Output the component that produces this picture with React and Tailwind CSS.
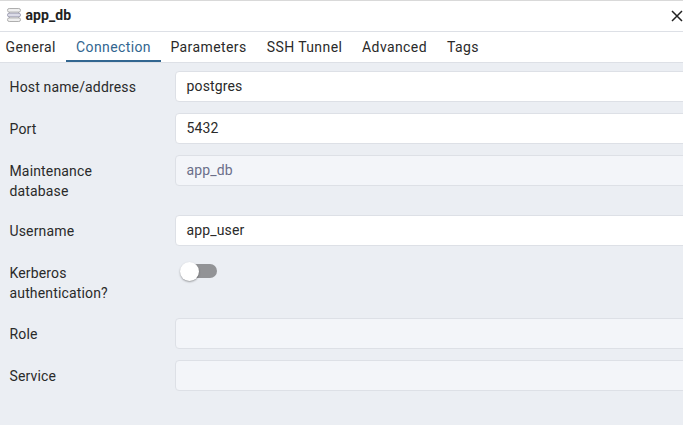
import React from 'react';

const tabs = [
  { name: 'General', cls: 'w-[66px] pl-[5.5px]' },
  { name: 'Connection', cls: 'w-[95px] justify-center border-b-2 border-[#326690] pt-[2px] text-[#326690]' },
  { name: 'Parameters', cls: 'w-[95px] justify-center' },
  { name: 'SSH Tunnel', cls: 'w-[97px] justify-center' },
  { name: 'Advanced', cls: 'w-[83px] justify-center' },
  { name: 'Tags', cls: 'w-[54px] justify-center' },
];

function Row({ label, className, children }) {
  return (
    <div className={`flex items-start ${className}`}>
      <div className="w-[165.5px] shrink-0 pt-[6px] pr-6">{label}</div>
      {children}
    </div>
  );
}

function Field({ value, disabled }) {
  return (
    <div
      className={`flex h-[31px] w-[600px] shrink-0 items-center rounded border border-[#dde0e6] px-[10.5px] pb-[2px] ${
        disabled ? 'bg-[#f3f5f9] text-[#6b6f8a]' : 'bg-white'
      }`}
    >
      {value}
    </div>
  );
}

function ServerIcon() {
  return (
    <svg className="mr-1 mb-[2px] h-4 w-4 shrink-0" viewBox="0 0 16 16" fill="#efefef" stroke="#aeaeae">
      <path d="M3.5 4.5V12M12.5 4.5V12" />
      <rect x="1.5" y="1.5" width="13" height="3.6" rx="1.7" />
      <rect x="1.5" y="6.2" width="13" height="3.6" rx="1.7" fill="#dcdce8" stroke="#a2a2b6" />
      <rect x="1.5" y="10.9" width="13" height="3.6" rx="1.7" />
    </svg>
  );
}

export default function App() {
  return (
    <div className="h-[425px] w-[683px] overflow-hidden bg-[#ebeef3] font-['Roboto',sans-serif] text-[14px] leading-5 tracking-[0.15px] text-[#2a2a2a] antialiased">
      <div className="flex h-8 items-center border-t border-b border-t-[#d9d9d9] border-b-[#dde0e6] bg-white pl-[6px]">
        <ServerIcon />
        <div className="-ml-[0.5px] pb-[2px] font-bold tracking-[0.1px] text-[#222]">app_db</div>
        <svg className="ml-auto h-[12px] w-[12px] shrink-0" viewBox="0 0 12 12" stroke="#222" strokeWidth="1.5">
          <path d="M1 1L11 11M11 1L1 11" />
        </svg>
      </div>
      <div className="flex h-[31px] border-b border-[#dde0e6] bg-white tracking-[0.4px]">
        {tabs.map((t) => (
          <div key={t.name} className={`flex shrink-0 items-center ${t.cls}`}>
            {t.name}
          </div>
        ))}
      </div>
      <div className="pt-2 pl-[9.5px]">
        <Row label="Host name/address" className="h-[42px]"><Field value="postgres" /></Row>
        <Row label="Port" className="h-[42px]"><Field value="5432" /></Row>
        <Row label="Maintenance database" className="h-[60px]"><Field value="app_db" disabled /></Row>
        <Row label="Username" className="h-[42px]"><Field value="app_user" /></Row>
        <Row label="Kerberos authentication?" className="h-[61px]">
          <div className="mt-[7px] ml-[7px] flex h-[14px] w-[35px] items-center rounded-full bg-[#929396]">
            <div className="-ml-[2.5px] h-[19px] w-[19px] shrink-0 rounded-full bg-white shadow-[0_1px_2px_rgba(0,0,0,0.35)]" />
          </div>
        </Row>
        <Row label="Role" className="h-[42px]"><Field disabled /></Row>
        <Row label="Service" className="h-[42px]"><Field disabled /></Row>
      </div>
    </div>
  );
}
